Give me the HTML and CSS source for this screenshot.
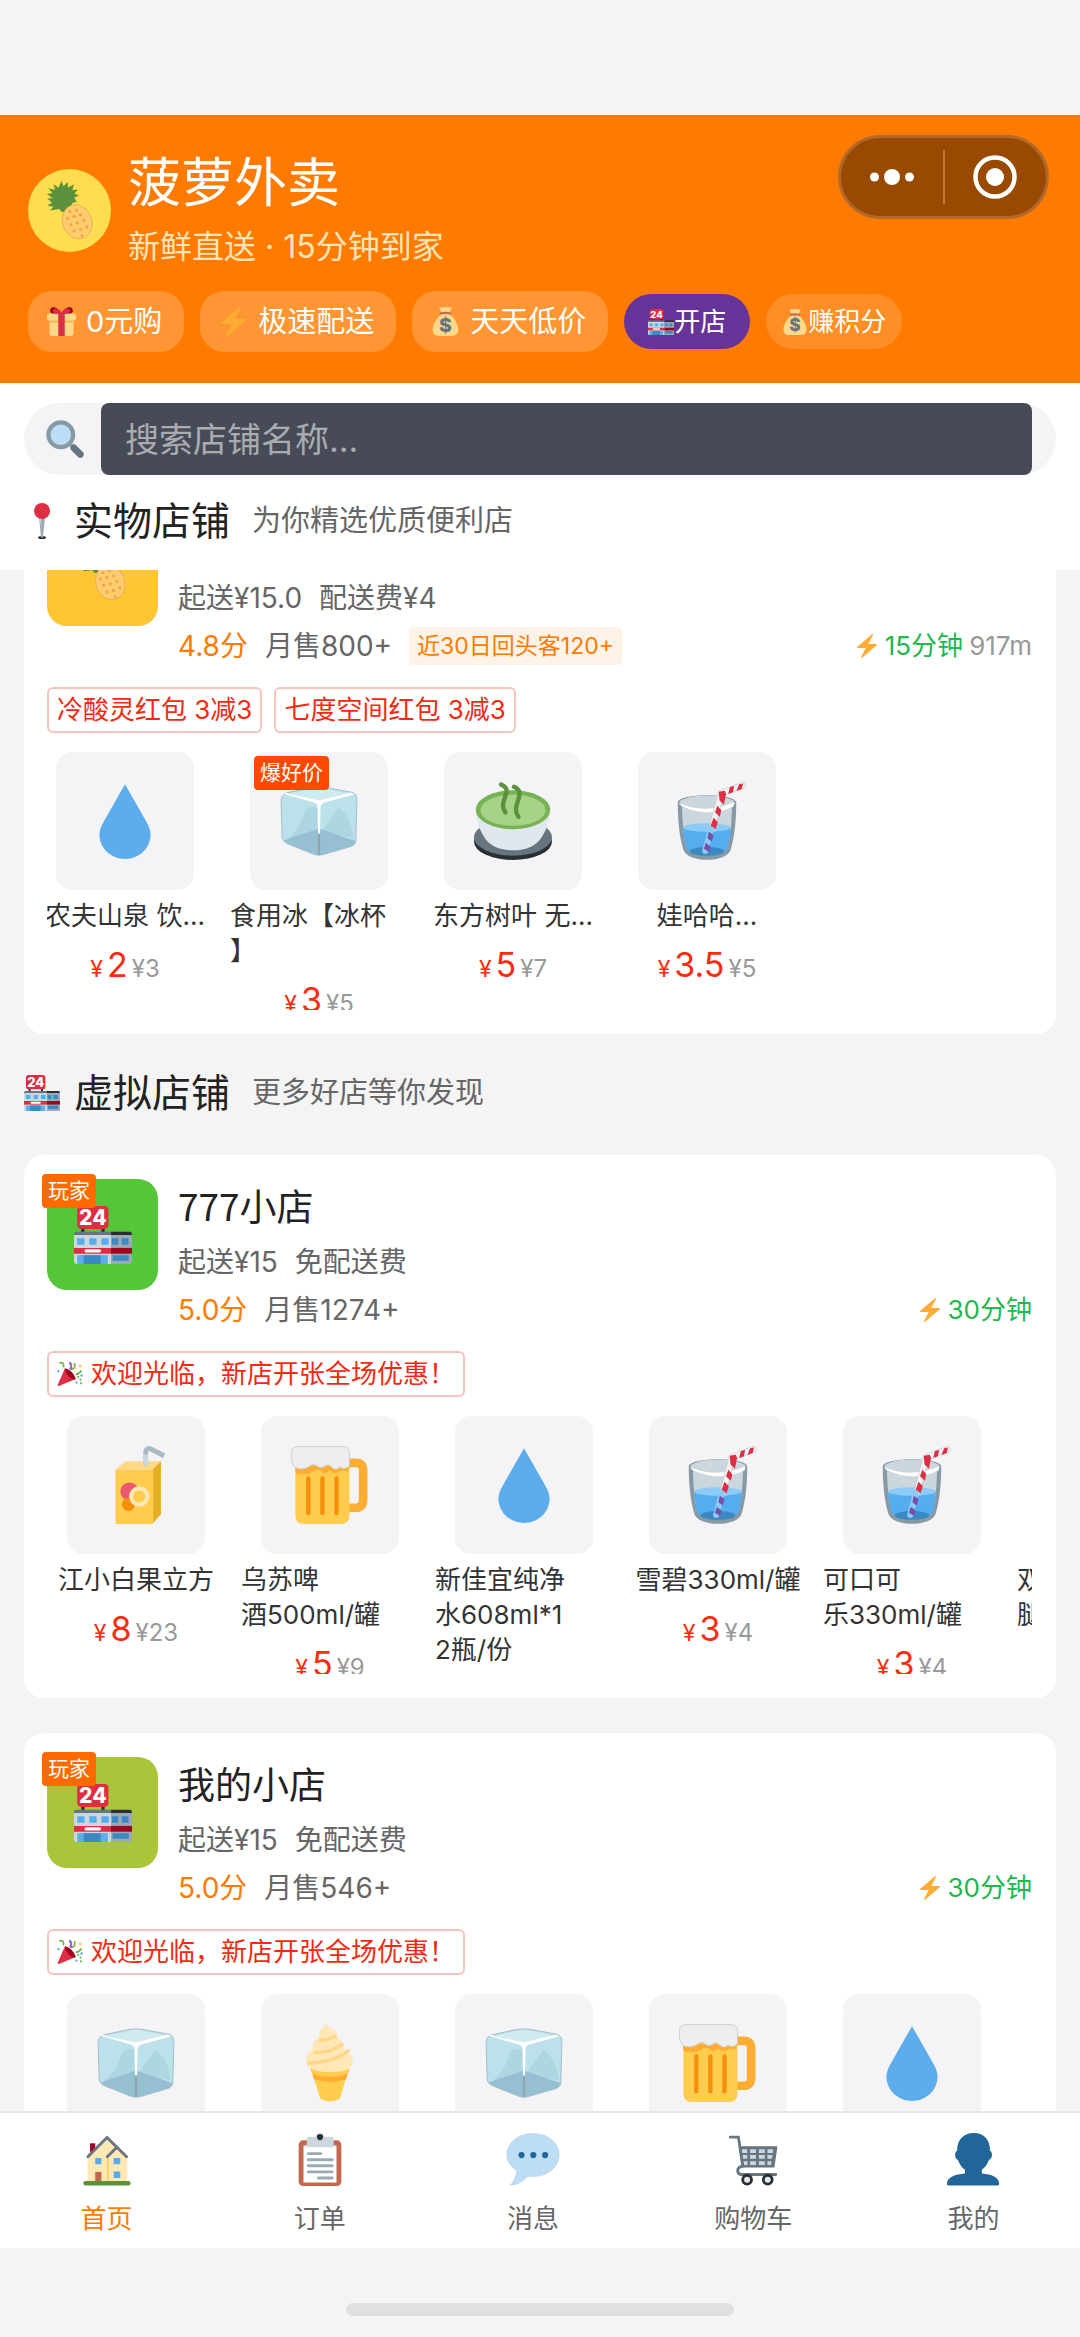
FILE: index.html
```html
<!DOCTYPE html>
<html lang="zh-CN">
<head>
<meta charset="utf-8">
<meta name="viewport" content="width=device-width, initial-scale=1">
<title>菠萝外卖</title>
<link rel="stylesheet" href="styles.css">
</head>
<body>
<svg class="sprite" aria-hidden="true">
  <symbol id="i-pineapple" viewBox="0 0 36 36">
    <path fill="#5C913B" d="M12.600 0l1.400 3.200 2.600-2.600.2 3.600L20.500 2l-1 3.700 3.500-.6-2.300 2.800 3 1-3 1.300 1.500 2.800-2.700.6-2 5.400-4.700.2-1.500-1.800-5.800.9 2.300-2.300-4-.8 3-1.700-2.900-2.600 3.400-.2L3.600 8l3.600-.5-2.800-3 4.300 1-.9-3.600 3.100 2.300z"/>
    <ellipse cx="22.500" cy="25.300" rx="9" ry="10.800" transform="rotate(-20 22.500 25.300)" fill="#FFCC6E" stroke="#E9A85A" stroke-width=".5"/>
    <g fill="#F2A549"><circle cx="18" cy="19" r="1"/><circle cx="22" cy="18" r="1"/><circle cx="16.500" cy="23" r="1"/><circle cx="20.500" cy="22" r="1"/><circle cx="24.500" cy="21" r="1"/><circle cx="18.500" cy="27" r="1"/><circle cx="22.500" cy="26" r="1"/><circle cx="26.500" cy="24.500" r="1"/><circle cx="20.500" cy="31" r="1"/><circle cx="24.500" cy="30" r="1"/><circle cx="28.500" cy="28.500" r="1"/><circle cx="25.500" cy="34" r="1"/></g>
  </symbol>
  <symbol id="i-gift" viewBox="0 0 36 36">
    <path fill="#FDD888" d="M3 16h30v17a3 3 0 0 1-3 3H6a3 3 0 0 1-3-3z"/>
    <rect y="8" width="36" height="9" rx="3" fill="#FDD888"/><path fill="#FCAB40" d="M3 17h30v2H3z"/>
    <path fill="#DA2F47" d="M14 8h8v28h-8z"/>
    <path fill="#A0041E" d="M18 8C15 2 9-1 6 1S3 7 7 8zM18 8c3-6 9-9 12-7s3 6-1 7z"/><path fill="#DA2F47" d="M18 7c-3-5-8-6-10-4s0 4 2 5h16c2-1 4-3 2-5s-7-1-10 4z"/>
  </symbol>
  <symbol id="i-bolt" viewBox="0 0 36 36">
    <path fill="#FFAC33" d="M32.938 15.651C32.792 15.260 32.418 15 32 15H19.925L26.890 1.458c.219-.426.106-.947-.271-1.243C26.437.071 26.218 0 26 0c-.233 0-.466.082-.653.243L18 6.588 3.347 19.243c-.316.273-.430.714-.284 1.105S3.582 21 4 21h12.075L9.110 34.542c-.219.426-.106.947.271 1.243.182.144.401.215.619.215.233 0 .466-.082.653-.243L18 29.412l14.653-12.655c.317-.273.430-.714.285-1.106z"/>
  </symbol>
  <symbol id="i-bag" viewBox="0 0 36 36">
    <path fill="#FDD888" d="M10 1q8-2 16 0l-3 6H13zM13 9h10c6 4 11 13 11 19 0 5-3 8-8 8H10c-5 0-8-3-8-8C2 22 7 13 13 9z"/>
    <path fill="#BF6952" d="M11 7q7-2 14 0v2.500q-7-2-14 0z"/>
    <text x="18" y="31" text-anchor="middle" class="glyph" font-size="24" fill="#67757F">$</text>
  </symbol>
  <symbol id="i-store" viewBox="0 0 36 36">
    <path fill="#292F33" d="M4.500 13h2v4h-2zM17 13h2v4h-2z"/>
    <rect x="2" width="19.400" height="14.200" rx="2.500" fill="#DD2E44"/>
    <text x="11.700" y="11.800" text-anchor="middle" class="glyph" font-size="13" fill="#FFF">24</text>
    <path fill="#CCD6DD" d="M0 18h23v18H1.500Q0 36 0 34.500z"/><path fill="#99AAB5" d="M23 18h13v16.500q0 1.500-1.500 1.500H23z"/>
    <path fill="#66757F" d="M1.500 16H23v2H0q0-2 1.500-2z"/><path fill="#292F33" d="M23 16h11.500Q36 16 36 18H23z"/>
    <path fill="#55ACEE" d="M2 20h4.500v4H2zM9.500 20H14v4H9.500zM17 20h4.500v4H17z"/><path fill="#3B88C3" d="M23.500 20h4v4h-4zM29.600 20h4.200v4h-4.200z"/>
    <path fill="#DD2E44" d="M0 26h23v3.600H0z"/><path fill="#A0041E" d="M23 26h13v3.600H23z"/><rect x="6.500" y="26.800" width="10.300" height="2" rx="1" fill="#FFF"/>
    <path fill="#5DADEC" d="M2 30.500h19V36H2z"/><path fill="#3B88C3" d="M6 30.500h10.500V36H6zM24 30.500h10V34H24z"/>
  </symbol>
  <symbol id="i-search" viewBox="0 0 36 36">
    <path d="M22 22l4 4" stroke="#99AAB5" stroke-width="4"/><path d="M26.500 26.500l6 6" stroke="#66757F" stroke-width="6.500" stroke-linecap="round"/>
    <circle cx="14" cy="14" r="11.700" fill="#BBDDF5" stroke="#8899A6" stroke-width="4"/>
  </symbol>
  <symbol id="i-pin" viewBox="0 0 36 36">
    <ellipse cx="18" cy="34.500" rx="4" ry="1.500" fill="#292F33"/>
    <path fill="#99AAB5" d="M15 13h6l-2 21.500h-2z"/><path fill="#CCD6DD" d="M15 13h2l.5 12z"/><circle cx="18" cy="8" r="8" fill="#DD2E44"/>
  </symbol>
  <symbol id="i-drop" viewBox="0 0 36 36">
    <path fill="#5DADEC" d="M18 1L8.200 18.200C6.800 20.700 6.200 22.500 6.200 24.200 6.200 30.500 11.500 35.500 18 35.500s11.800-5 11.800-11.300c0-1.700-.6-3.500-2-6z"/>
  </symbol>
  <symbol id="i-ice" viewBox="0 0 36 36">
    <path fill="#BDE1EA" stroke="#9DB6C0" stroke-width=".4" d="M3 5l12-2.500q3-.5 6 0L33 4.700q2.500.6 2.500 3.300L35 27.200q-.2 1.800-2 2.500L20 33.500q-2 .6-4 0L3.500 28.500q-2.300-1-2.500-3L.5 9Q.5 6 3 5z"/>
    <path fill="#CFEBF0" d="M3.500 5.500L18 2.500l14.500 3L18 9z"/>
    <path fill="#9CCBDA" opacity=".5" d="M17 12v12L2 27.500Q9 22 10.500 16T17 12zM19 23l8-11Q33 16 34 26z"/>
    <path fill="#97BFD2" d="M1.500 27L18 21.500 35 27.300q-.5 1.700-2 2.400L20 33.500q-2 .6-4 0L3.500 28.500z"/>
    <path fill="#FFF" d="M2 5.500q1-1 2 0L18 8.500l14.500-3.500q1.500 0 1.500.8L20 9.600q-1.300.7-1.300 2.200l-.2 12h-.9l-.2-12q0-1.500-1.400-2.200z"/>
    <path d="M18 24v9.500" stroke="#8FA3B0" stroke-width="1"/>
  </symbol>
  <symbol id="i-tea" viewBox="0 0 36 36">
    <ellipse cx="18" cy="27.500" rx="18" ry="8.500" fill="#292F33"/><ellipse cx="18" cy="25.500" rx="18" ry="8.500" fill="#66757F"/>
    <path fill="#E1E8ED" d="M1 13h34c0 4-1 8-3.500 12C29 29.500 24 31.500 18 31.500S7 29.500 4.500 25C2 21 1 17 1 13z"/>
    <ellipse cx="18" cy="12.800" rx="17.200" ry="9" fill="#77B255"/><ellipse cx="18" cy="13" rx="15" ry="7.200" fill="#A6D388"/>
    <path d="M12.500 1.200C19 4 10.500 9 14.500 14M18.500 2.200c6.500 3-2 8.500 2 13.800" fill="none" stroke="#5C913B" stroke-width="2" stroke-linecap="round"/>
  </symbol>
  <symbol id="i-glass" viewBox="0 0 36 36">
    <path fill="#8899A6" d="M4.500 9.500C5 5 31 5 31.500 9.500c0 8-.8 16-2.500 21.500C27.500 37.500 8.500 37.500 7 31 5.300 25.500 4.500 17.500 4.500 9.500z"/>
    <path fill="#CCD6DD" d="M6.500 11h23c0 7-.7 14-2 19-1.500 4.500-17.500 4.500-19 0-1.300-5-2-12-2-19z"/><ellipse cx="18" cy="9.800" rx="12.800" ry="3.600" fill="#CCD6DD"/>
    <path fill="#55ACEE" d="M7 21h22c-.2 3.500-.8 7-1.500 9.500-1.500 4.500-17.500 4.500-19 0C7.800 28 7.200 24.500 7 21z"/><ellipse cx="18" cy="21" rx="11" ry="2" fill="#8CCAF7"/><ellipse cx="18" cy="32" rx="8" ry="2" fill="#3B88C3"/>
    <path fill="#FFF" d="M5.800 10q12 5 24.500-.5v1.800q-12 5.500-24-.2z"/>
    <path d="M20.300 21.500L24.500 5.200 34.300 1.700" fill="none" stroke="#B9BFC4" stroke-width="3" stroke-linejoin="round" stroke-linecap="round"/>
    <path d="M20.300 21.500L24.500 5.200 34.300 1.700" fill="none" stroke="#F1F1F2" stroke-width="2.600" stroke-linejoin="round" stroke-linecap="round"/>
    <path fill="#DD2E44" d="M23.400 4.500l2.800-.5.6 1.500-1 5-2-2zM28.500 2.400l2-.7-.5 3-2.200.8zM32.800 1l1.800-.3-.6 2.500-2.400 1zM22.800 11l1.800 2-.7 3-2.200-2zM21 16.500l2 2-1 3.200-2.600-.7z"/>
    <path d="M17.200 31.800l2.600-10" stroke="#8CCAF7" stroke-width="2.800" stroke-linecap="round"/><path fill="#7450A8" d="M18.800 23l2.200 1.500-.8 3-2-1.500zM17.400 28.200l2.200 1.500-.6 2.600-2.400-1.500z"/>
  </symbol>
  <symbol id="i-juice" viewBox="0 0 36 36">
    <path fill="#FFD983" d="M8.500 11L13 7h16.500l-4 4z"/><path fill="#E5AE20" d="M25.500 11L29.500 7v24.500l-4 4.500z"/><path fill="#FFCC4D" d="M8.500 11H26v25H9.500q-1 0-1-1z"/>
    <path d="M22.500 9V3q0-2 2-1.800L31 4.500" fill="none" stroke="#AAB8C2" stroke-width="2.200"/><path d="M22.500 9V4" stroke="#CCD6DD" stroke-width="2.200"/>
    <circle cx="15" cy="21" r="4.200" fill="#EA596E"/><circle cx="14.500" cy="27" r="3" fill="#F4900C"/><circle cx="19.500" cy="23.300" r="4.700" fill="#FFE8B6"/><circle cx="19.500" cy="23.300" r="2.800" fill="#FFCC4D"/>
  </symbol>
  <symbol id="i-beer" viewBox="0 0 36 36">
    <path d="M26 7.800h4q3.300 0 3.300 3.500v13.500q0 3.700-3.500 3.700H26" fill="none" stroke="#FFAC33" stroke-width="4"/>
    <path fill="#FFCC4D" d="M2 9h25v23q0 4-4 4H6q-4 0-4-4z"/><path fill="#FFAC33" d="M2 9h25l-1 3q-2-1.500-4 0-2 1.500-4-.8-2 2-3.500.8-2-1.800-4-.3-2 2-5 1-2.500.5-3.500-.5z"/>
    <path fill="#EEE" stroke="#C6CCD0" stroke-width=".4" d="M3 .3h21q3 0 3 3V9q-2 2.300-4.500.8-2 2-3.800-.2-1.800-1.800-3.400 0-1.800 1-3.300-.4-2-1.700-3.500.3Q5 11.500 2.200 10 .2 8.500.2 6V3q0-2.700 2.800-2.700z"/>
    <path d="M8 15v16M14.500 15v16M21 15v16" stroke="#F4900C" stroke-width="2" stroke-linecap="round"/>
  </symbol>
  <symbol id="i-cone" viewBox="0 0 36 36">
    <path fill="#FFCC4D" d="M9 20h18l-4.500 14.500Q18 37 13.500 34.500z"/><path fill="#FFAC33" d="M9 20h18l-1.500 5.500Q18 28 10.500 25.500z"/><path fill="#FFCC4D" d="M9 20h18l-.8 3Q18 26 9.800 23z"/>
    <path fill="#FFE8B6" d="M16.500 0q1 2 3 2.500 2.500 1 2 4 3 1.500 3 5 4.500 3 4 7-1 3.700-10.500 3.700T7 18q-.5-4.500 3-6.500-.5-3.500 3-5-.5-4 3.500-6.500z"/>
    <path d="M12.800 7.500q5 0 8-2.200M10.500 13q8 .5 13.500-4M7.500 18q12 0 19.500-6" fill="none" stroke="#FFD586" stroke-width="1.500"/>
  </symbol>
  <symbol id="i-party" viewBox="0 0 36 36">
    <path fill="#DD2E44" d="M11 10Q22 13 26 25L2.500 34.500Q.5 35 1 33z"/><path fill="#A0041E" d="M11 10q11 3 15 15-5 2-10-4t-5-11z"/>
    <path d="M3 3q7-3 6 6M19 12q8-2 5-9M26 19q6-2 8-6" fill="none" stroke="#77B255" stroke-width="2.500"/><path d="M17 2q5 4 1 10" fill="none" stroke="#9266CC" stroke-width="3"/>
    <path d="M28 22q6 0 5 12" fill="none" stroke="#77B255" stroke-width="2.500" stroke-dasharray="3 2"/>
    <g fill="#FFCC4D"><circle cx="32" cy="7" r="2"/><circle cx="25" cy="10" r="1.500"/></g><g fill="#55ACEE"><circle cx="2" cy="14" r="1.700"/><circle cx="34" cy="20" r="1.700"/><circle cx="27" cy="30" r="1.500"/></g>
  </symbol>
  <symbol id="i-house" viewBox="0 0 36 36">
    <path fill="#A0041E" d="M6.500 7H10v6H6.500z"/><path fill="#FFE8B6" d="M4.800 15.500L18 3l13.800 12.500V34h-27z"/><path fill="#FFCC4D" d="M18 15.500h1V33h-1z"/>
    <path fill="#55ACEE" d="M10 17h4.200v4.300H10zM22.500 17H27v4.300h-4.500zM22.500 26.200H27v4.300h-4.500z"/><path fill="#C1694F" d="M10 26.400h4.200V34H10z"/>
    <path d="M5 16.200L18 3l13.300 13.200M18.200 16.200l6-6" fill="none" stroke="#66757F" stroke-width="1.900" stroke-linecap="round"/><rect x="2" y="32.600" width="32" height="3" rx="1.500" fill="#5C913B"/>
  </symbol>
  <symbol id="i-clip" viewBox="0 0 36 36">
    <rect x="3.500" y="5" width="29" height="31" rx="3" fill="#C1694F"/><path fill="#FFF" d="M6.800 8.500h22.400v25.100H6.800z"/>
    <path fill="#CCD6DD" d="M9 4q0-1.500 1.500-1.500H15a3.200 3.200 0 0 1 6 0h4.800q1.500 0 1.500 1.500v5.700H9z"/><circle cx="18" cy="2.800" r="2.100" fill="#292F33"/>
    <path d="M10 14h8.600M10 18.200h16.300M10 22.300h16.300M10 26.400h16.300M17 30.500h9.300" stroke="#99AAB5" stroke-width="2" stroke-linecap="round"/>
  </symbol>
  <symbol id="i-chat" viewBox="0 0 36 36">
    <path fill="#BDDDF4" stroke="#A9C9E0" stroke-width=".3" d="M18 .3C8 .3.200 6.500.200 14.800c0 4.500 2.500 8 6.500 10.500.3 3.500-1.700 7.500-4.200 10.200 5-.3 9.500-3 12-6.200q1.700.3 3.500.3c10 0 17.800-6.500 17.800-14.800S28 .300 18 .3z"/>
    <g fill="#269"><circle cx="10.200" cy="15" r="2.100"/><circle cx="18.200" cy="15" r="2.100"/><circle cx="26.200" cy="15" r="2.100"/></g>
  </symbol>
  <symbol id="i-cart" viewBox="0 0 36 36">
    <path fill="#66757F" d="M8.500 9H34q.7 0 .5 1l-2 13.500h-22z"/>
    <path fill="#CCD6DD" d="M10.300 11h3.800v2.500h-3.600zM16 11h4v2.500h-4zM22 11h4v2.500h-4zM27.800 11h4l-.4 2.500h-3.600zM10.900 15h3.200v2.500h-2.900zM16 15h4v2.500h-4zM22 15h4v2.500h-4zM27.800 15h3.400l-.4 2.500h-3zM11.500 19.200h2.800v2.500h-2.500zM16 19.200h4v2.500h-4zM22 19.200h4v2.500h-4zM27.800 19.200h2.800l-.3 2.500h-2.500z"/>
    <path d="M2.500 2.800h5.600L11 22.500q-3.500.7-3.400 3.200t2.800 2.500H33.500" fill="none" stroke="#66757F" stroke-width="1.900" stroke-linecap="round"/>
    <g fill="#E1E8ED" stroke="#292F33" stroke-width="1.900"><circle cx="14" cy="31.700" r="3"/><circle cx="28" cy="31.700" r="3"/></g>
  </symbol>
  <symbol id="i-user" viewBox="0 0 36 36">
    <path fill="#269" d="M18.600 0C11.500 0 7.200 4.500 7.200 12c-2 1-1.800 5.500.6 6.300 1 3 2.700 5.300 4.700 6.700v2.500C6 28 .300 30 .300 34.500q0 1.200 1 1.200h33.500q1 0 1-1.200C35.800 30 30.500 28 24 27.500V25c2-1.400 3.800-3.700 4.800-6.700 2.500-.8 2.800-5.300.8-6.300C29.600 4.500 25.500 0 18.600 0z"/>
  </symbol>
</svg>

<div class="app">
  <header class="header">
    <div class="header-top">
      <div class="brand">
        <div class="brand-logo"><svg class="icon-58"><use href="#i-pineapple"/></svg></div>
        <div>
          <h1 class="brand-name">菠萝外卖</h1>
          <p class="brand-slogan">新鲜直送 · 15分钟到家</p>
        </div>
      </div>
      <div class="capsule">
        <button class="capsule-btn" aria-label="更多"><svg width="46" height="46" viewBox="0 0 46 46" fill="#fff"><circle cx="5.500" cy="23" r="4.500"/><circle cx="23" cy="23" r="8"/><circle cx="40.500" cy="23" r="4.500"/></svg></button>
        <span class="capsule-line"></span>
        <button class="capsule-btn" aria-label="关闭"><svg width="46" height="46" viewBox="0 0 46 46"><circle cx="23" cy="23" r="19.500" fill="none" stroke="#fff" stroke-width="4.500"/><circle cx="23" cy="23" r="9" fill="#fff"/></svg></button>
      </div>
    </div>
    <div class="chips">
      <button class="chip"><svg class="icon-29"><use href="#i-gift"/></svg>0元购</button>
      <button class="chip"><svg class="icon-29"><use href="#i-bolt"/></svg>极速配送</button>
      <button class="chip"><svg class="icon-29"><use href="#i-bag"/></svg>天天低价</button>
      <button class="chip chip-small chip-open"><svg class="icon-26"><use href="#i-store"/></svg>开店</button>
      <button class="chip chip-small chip-earn"><svg class="icon-26"><use href="#i-bag"/></svg>赚积分</button>
    </div>
  </header>

  <div class="top-panel">
    <div class="search">
      <label class="search-label" for="q" aria-label="搜索"><svg class="icon-38"><use href="#i-search"/></svg></label>
      <input class="search-input" id="q" type="text" placeholder="搜索店铺名称...">
    </div>
    <div class="section-head">
      <svg class="icon-36"><use href="#i-pin"/></svg>
      <h2 class="section-title">实物店铺</h2>
      <span class="section-sub">为你精选优质便利店</span>
    </div>
  </div>

  <main class="feed">
    <article class="card card-first">
      <div class="shop">
        <div class="shop-logo logo-yellow"><svg class="icon-58"><use href="#i-pineapple"/></svg></div>
        <div class="shop-info">
          <p class="row"><span>起送¥15.0</span><span>配送费¥4</span></p>
          <p class="row"><span class="score">4.8分</span><span>月售800+</span><span class="repeat">近30日回头客120+</span><span class="eta"><svg class="icon-24"><use href="#i-bolt"/></svg><span class="time">15分钟</span><span class="distance">917m</span></span></p>
        </div>
      </div>
      <div class="coupons"><span class="coupon">冷酸灵红包 3减3</span><span class="coupon">七度空间红包 3减3</span></div>
      <div class="scroller">
        <ul class="products products-shifted">
          <li class="product"><div class="tile"><svg class="icon-78"><use href="#i-drop"/></svg></div><p class="name">农夫山泉 饮...</p><p class="price"><span class="yen">¥</span><span class="now">2</span><span class="was">¥3</span></p></li>
          <li class="product"><div class="tile"><svg class="icon-78"><use href="#i-ice"/></svg><span class="tag tag-hot">爆好价</span></div><p class="name name-wrap">食用冰【冰杯<br>】</p><p class="price"><span class="yen">¥</span><span class="now">3</span><span class="was">¥5</span></p></li>
          <li class="product"><div class="tile"><svg class="icon-78"><use href="#i-tea"/></svg></div><p class="name">东方树叶 无...</p><p class="price"><span class="yen">¥</span><span class="now">5</span><span class="was">¥7</span></p></li>
          <li class="product"><div class="tile"><svg class="icon-78"><use href="#i-glass"/></svg></div><p class="name">娃哈哈...</p><p class="price"><span class="yen">¥</span><span class="now">3.5</span><span class="was">¥5</span></p></li>
        </ul>
      </div>
    </article>

    <div class="section-head section-virtual">
      <svg class="icon-36"><use href="#i-store"/></svg>
      <h2 class="section-title">虚拟店铺</h2>
      <span class="section-sub">更多好店等你发现</span>
    </div>

    <article class="card">
      <div class="shop">
        <div class="shop-logo logo-green"><svg class="icon-58"><use href="#i-store"/></svg><span class="tag tag-player">玩家</span></div>
        <div class="shop-info">
          <h3 class="shop-name">777小店</h3>
          <p class="row"><span>起送¥15</span><span>免配送费</span></p>
          <p class="row"><span class="score">5.0分</span><span>月售1274+</span><span class="eta"><svg class="icon-24"><use href="#i-bolt"/></svg><span class="time">30分钟</span></span></p>
        </div>
      </div>
      <div class="coupons"><span class="coupon"><svg class="icon-26"><use href="#i-party"/></svg>欢迎光临，新店开张全场优惠！</span></div>
      <div class="scroller">
        <ul class="products">
          <li class="product"><div class="tile"><svg class="icon-78"><use href="#i-juice"/></svg></div><p class="name">江小白果立方</p><p class="price"><span class="yen">¥</span><span class="now">8</span><span class="was">¥23</span></p></li>
          <li class="product"><div class="tile"><svg class="icon-78"><use href="#i-beer"/></svg></div><p class="name name-wrap">乌苏啤<br>酒500ml/罐</p><p class="price"><span class="yen">¥</span><span class="now">5</span><span class="was">¥9</span></p></li>
          <li class="product"><div class="tile"><svg class="icon-78"><use href="#i-drop"/></svg></div><p class="name name-wrap">新佳宜纯净<br>水608ml*1<br>2瓶/份</p></li>
          <li class="product"><div class="tile"><svg class="icon-78"><use href="#i-glass"/></svg></div><p class="name">雪碧330ml/罐</p><p class="price"><span class="yen">¥</span><span class="now">3</span><span class="was">¥4</span></p></li>
          <li class="product"><div class="tile"><svg class="icon-78"><use href="#i-glass"/></svg></div><p class="name name-wrap">可口可<br>乐330ml/罐</p><p class="price"><span class="yen">¥</span><span class="now">3</span><span class="was">¥4</span></p></li>
          <li class="product"><div class="tile"></div><p class="name name-wrap">双<br>腿</p></li>
        </ul>
      </div>
    </article>

    <article class="card">
      <div class="shop">
        <div class="shop-logo logo-lime"><svg class="icon-58"><use href="#i-store"/></svg><span class="tag tag-player">玩家</span></div>
        <div class="shop-info">
          <h3 class="shop-name">我的小店</h3>
          <p class="row"><span>起送¥15</span><span>免配送费</span></p>
          <p class="row"><span class="score">5.0分</span><span>月售546+</span><span class="eta"><svg class="icon-24"><use href="#i-bolt"/></svg><span class="time">30分钟</span></span></p>
        </div>
      </div>
      <div class="coupons"><span class="coupon"><svg class="icon-26"><use href="#i-party"/></svg>欢迎光临，新店开张全场优惠！</span></div>
      <div class="scroller">
        <ul class="products">
          <li class="product"><div class="tile"><svg class="icon-78"><use href="#i-ice"/></svg></div></li>
          <li class="product"><div class="tile"><svg class="icon-78"><use href="#i-cone"/></svg></div></li>
          <li class="product"><div class="tile"><svg class="icon-78"><use href="#i-ice"/></svg></div></li>
          <li class="product"><div class="tile"><svg class="icon-78"><use href="#i-beer"/></svg></div></li>
          <li class="product"><div class="tile"><svg class="icon-78"><use href="#i-drop"/></svg></div></li>
        </ul>
      </div>
    </article>
  </main>

  <nav class="tabbar">
    <a class="tab tab-active" href="#home"><svg class="tab-icon"><use href="#i-house"/></svg>首页</a>
    <a class="tab" href="#orders"><svg class="tab-icon"><use href="#i-clip"/></svg>订单</a>
    <a class="tab" href="#messages"><svg class="tab-icon"><use href="#i-chat"/></svg>消息</a>
    <a class="tab" href="#cart"><svg class="tab-icon"><use href="#i-cart"/></svg>购物车</a>
    <a class="tab" href="#me"><svg class="tab-icon"><use href="#i-user"/></svg>我的</a>
  </nav>
  <div class="home-area"><span class="home-bar"></span></div>
</div>
</body>
</html>
```
FILE: styles.css
```css
* { box-sizing: border-box; margin: 0; padding: 0; }

body {
  background: #f4f4f4;
  color: #666;
  font-family: Inter, "Noto Sans CJK SC", sans-serif;
  font-size: 29px;
  line-height: 34px;
}

h1, h2, h3 { font-weight: 400; }
ul { list-style: none; }
a { color: inherit; text-decoration: none; }
button { border: 0; background: none; font: inherit; color: inherit; }
svg { display: block; flex: none; }

.sprite { display: none; }
.glyph { font-family: Inter, sans-serif; font-weight: 800; }

.icon-24 { width: 24px; height: 24px; }
.icon-26 { width: 26px; height: 26px; }
.icon-29 { width: 29px; height: 29px; }
.icon-36 { width: 36px; height: 38px; }
.icon-38 { width: 38px; height: 38px; }
.icon-58 { width: 58px; height: 58px; }
.icon-78 { width: 78px; height: 78px; }

.app {
  display: flex;
  flex-direction: column;
  height: 100vh;
  padding-top: 115px;
}

/* header */
.header {
  flex: none;
  padding: 20px 31px 31px 28px;
  background: #ff7a00;
  color: #fff;
}
.header-top {
  display: flex;
  justify-content: space-between;
  align-items: flex-start;
}
.brand {
  display: flex;
  align-items: center;
  gap: 17px;
  padding-top: 16px;
}
.brand-logo {
  display: grid;
  place-items: center;
  width: 83px;
  height: 83px;
  border-radius: 50%;
  background: #ffdd50;
}
.brand-name { font-size: 53px; line-height: 64px; }
.brand-slogan {
  margin-top: 10px;
  font-size: 32px;
  line-height: 44px;
  color: #ffe4b8;
}
.capsule {
  display: flex;
  align-items: center;
  width: 211px;
  height: 84px;
  border: 3px solid #b0692b;
  border-radius: 42px;
  background: #994a00;
}
.capsule-btn { flex: 1; display: grid; place-items: center; }
.capsule-line { width: 2px; height: 54px; background: #bd7a3a; }

.chips {
  display: flex;
  align-items: center;
  gap: 16px;
  margin-top: 22px;
}
.chip {
  display: flex;
  align-items: center;
  gap: 10px;
  height: 61px;
  padding: 0 22px 0 19px;
  border-radius: 24px;
  background: #ff9533;
  white-space: nowrap;
}
.chip-small {
  gap: 0;
  height: 55px;
  border-radius: 28px;
  font-size: 26px;
}
.chip-open { padding: 0 24px; background: #663399; }
.chip-earn { padding: 0 16px; background: #ff8e26; }

/* search and sticky heading */
.top-panel {
  flex: none;
  padding: 20px 24px 23px;
  background: #fff;
}
.search {
  display: flex;
  height: 72px;
  padding-right: 24px;
  border-radius: 36px;
  background: #f4f4f7;
}
.search-label {
  display: grid;
  place-items: center;
  width: 77px;
  padding-left: 4px;
}
.search-input {
  flex: 1;
  min-width: 0;
  padding: 0 24px;
  border: 0;
  border-radius: 8px;
  background: #464b57;
  color: #fff;
  font: inherit;
  font-size: 34px;
}
.search-input::placeholder { color: #aaacb0; opacity: 1; }

.section-head {
  display: flex;
  align-items: center;
  gap: 14px;
  height: 52px;
}
.top-panel .section-head { margin-top: 20px; }
.section-title { font-size: 39px; line-height: 52px; color: #222; }
.section-sub { margin-left: 8px; }
.section-virtual { margin: 33px 0 36px; }

/* feed */
.feed {
  flex: 1;
  min-height: 0;
  padding: 0 24px;
  overflow: hidden;
}
.card {
  padding: 24px 24px 24px 23px;
  border-radius: 20px;
  background: #fff;
}
.card + .card { margin-top: 35px; }
.card-first { margin-top: -79px; }

.shop { display: flex; gap: 20px; }
.shop-logo {
  position: relative;
  display: grid;
  place-items: center;
  flex: none;
  width: 111px;
  height: 111px;
  border-radius: 20px;
}
.logo-yellow { background: #ffc632; }
.logo-green { background: #55c638; }
.logo-lime { background: #a9c63a; }

.shop-info {
  flex: 1;
  display: flex;
  flex-direction: column;
  justify-content: flex-end;
  gap: 14px;
  min-height: 148px;
}
.shop-name {
  font-family: "Noto Sans CJK SC", sans-serif;
  font-size: 37px;
  line-height: 52px;
  color: #222;
}
.row {
  display: flex;
  align-items: center;
  gap: 17px;
  height: 34px;
  font-size: 28px;
  white-space: nowrap;
}
.score { color: #ff7a00; }
.repeat {
  padding: 0 8px;
  border-radius: 4px;
  background: #fff3e8;
  color: #ff7a00;
  font-size: 23px;
  line-height: 38px;
}
.eta {
  display: flex;
  align-items: center;
  gap: 6px;
  margin-left: auto;
  font-size: 26px;
}
.time { color: #20b94a; }
.distance { color: #999; }

.coupons { display: flex; gap: 12px; margin-top: 24px; }
.coupon {
  display: flex;
  align-items: center;
  gap: 8px;
  height: 46px;
  padding: 0 8px;
  border: 2px solid #f7c4bd;
  border-radius: 6px;
  color: #f5290f;
  font-size: 26px;
  white-space: nowrap;
}

.scroller {
  height: 258px;
  margin-top: 19px;
  overflow: hidden;
}
.products { display: flex; gap: 16px; }
.products-shifted { margin-left: -11px; }
.product {
  display: flex;
  flex-direction: column;
  align-items: center;
  flex: none;
  width: 178px;
}
.tile {
  position: relative;
  display: grid;
  place-items: center;
  width: 138px;
  height: 138px;
  border-radius: 16px;
  background: #f4f4f7;
}
.name {
  margin-top: 8px;
  font-size: 26px;
  line-height: 35px;
  color: #333;
  white-space: nowrap;
}
.name-wrap { width: 100%; }
.price {
  display: flex;
  align-items: baseline;
  gap: 4px;
  margin-top: 12px;
  line-height: 40px;
}
.yen { color: #fa2c0f; font-size: 23px; }
.now { color: #fa2c0f; font-size: 34px; }
.was { color: #999; font-size: 24px; }

.tag {
  position: absolute;
  padding: 0 6px;
  border-radius: 4px;
  color: #fff;
  font-size: 21px;
  line-height: 34px;
  white-space: nowrap;
}
.tag-hot { left: 4px; top: 4px; background: #ff4800; }
.tag-player { left: -5px; top: -5px; background: #ff6a00; }

/* bottom navigation */
.tabbar {
  flex: none;
  display: flex;
  border-top: 2px solid #e6e6e6;
  background: #fff;
}
.tab {
  flex: 1 1 auto;
  display: flex;
  flex-direction: column;
  align-items: center;
  gap: 16px;
  padding: 20px 0 12px;
  font-size: 26px;
}
.tab-icon { width: 64px; height: 53px; }
.tab-active { color: #ff7a00; }

.home-area {
  flex: none;
  display: flex;
  justify-content: center;
  padding: 55px 0 21px;
}
.home-bar {
  width: 36%;
  height: 13px;
  border-radius: 7px;
  background: #e0e0e0;
}
```
